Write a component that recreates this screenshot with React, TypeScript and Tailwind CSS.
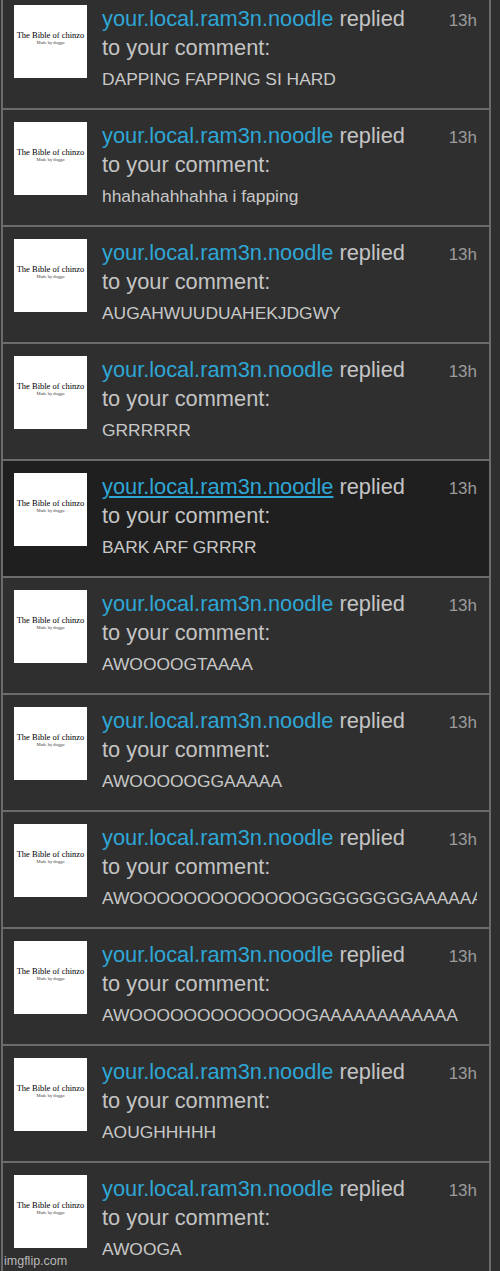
const messages = [
  "DAPPING FAPPING SI HARD",
  "hhahahahhahha i fapping",
  "AUGAHWUUDUAHEKJDGWY",
  "GRRRRRR",
  "BARK ARF GRRRR",
  "AWOOOOGTAAAA",
  "AWOOOOOGGAAAAA",
  "AWOOOOOOOOOOOOOGGGGGGGGAAAAAAAAA",
  "AWOOOOOOOOOOOOOGAAAAAAAAAAAA",
  "AOUGHHHHH",
  "AWOOGA",
];

function Avatar() {
  return (
    <div className="flex h-[73px] w-[73px] shrink-0 flex-col items-center justify-center bg-white pb-[8px] font-['Liberation_Serif',serif] text-black">
      <p className="whitespace-nowrap text-[8.5px] leading-[9px]">The Bible of chinzo</p>
      <p className="whitespace-nowrap text-[4.5px] leading-[5px] text-[#444]">Made by doggo</p>
    </div>
  );
}

function Row({ message, active }: { message: string; active?: boolean }) {
  return (
    <div
      className={
        "flex h-[117px] border-b-2 border-[#6b6b6b] pl-[11px] pr-[12px] pt-[12px] " +
        (active ? "bg-[#1f1f1f]" : "bg-[#2f2f2f]")
      }
    >
      <Avatar />
      <div className="ml-[15px] min-w-0 flex-1 overflow-hidden">
        <div className="flex items-baseline justify-between whitespace-nowrap text-[21.8px] leading-[28px]">
          <p>
            <span className={"text-[#2ea6d6]" + (active ? " underline underline-offset-2" : "")}>
              your.local.ram3n.noodle
            </span>
            <span className="text-[#c4c4c4]"> replied</span>
          </p>
          <span className="text-[17px] text-[#9c9c9c]">13h</span>
        </div>
        <p className="-mt-[1px] whitespace-nowrap text-[21.8px] leading-[28px] text-[#c4c4c4]">to your comment:</p>
        <p className="mt-[5px] whitespace-nowrap text-[17.4px] leading-[24px] text-[#c8c8c8]">{message}</p>
      </div>
    </div>
  );
}

export default function App() {
  return (
    <div className="relative h-[1271px] w-[500px] overflow-hidden bg-[#2f2f2f] font-['Liberation_Sans',Arial,sans-serif]">
      <div className="-mt-[7px] ml-[1px] w-[490px] border-x-2 border-[#6b6b6b]">
        {messages.map((m, i) => (
          <Row key={i} message={m} active={i === 4} />
        ))}
      </div>
      <p className="absolute bottom-[3px] left-[4px] text-[12.5px] leading-[14px] text-[#b8b8b8]">imgflip.com</p>
    </div>
  );
}
